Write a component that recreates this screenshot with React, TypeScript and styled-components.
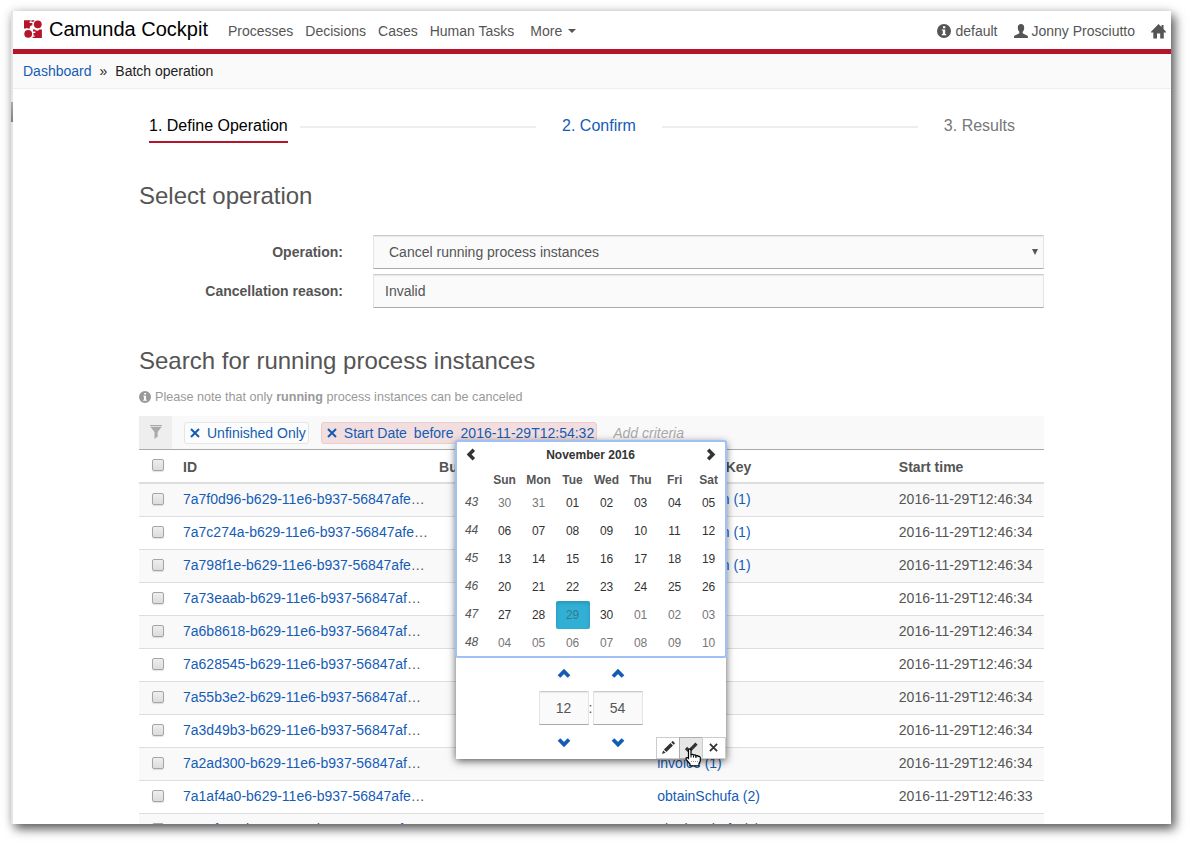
import React from "react";
import styled, { createGlobalStyle, css } from "styled-components";

const GlobalStyle = createGlobalStyle`
  *, *::before, *::after { box-sizing: border-box; }
  body {
    margin: 0;
    background: #fff;
    color: #555;
    font: 14px/20px "Liberation Sans", Arial, sans-serif;
  }
  button, input, select { font: inherit; color: inherit; margin: 0; }
  button { cursor: pointer; }
  a { text-decoration: none; }
  h1, h2, p, ul, ol { margin: 0; padding: 0; font-weight: normal; }
  ul, ol { list-style: none; }
`;

const colors = {
  link: "#155cb5",
  brand: "#b5152b",
  text: "#555",
  dark: "#333",
  soft: "#fafafa",
};

/* ---------- icons ---------- */

const Svg = styled.svg<{ $size?: number }>`
  display: block;
  flex: none;
  width: ${(p) => p.$size ?? 14}px;
  height: ${(p) => p.$size ?? 14}px;
  fill: currentColor;
`;

const Logo = () => (
  <Svg $size={18} viewBox="0 0 18 18" aria-hidden="true">
    <path d="M0 0.3H6.6V1.6H5.6V3H8.3V5.4H7.2A2 2 0 0 0 5.8 7.4V8.6H3.8A1.3 1.3 0 0 0 1.6 8.6H0Z" />
    <path d="M7.4 0.3H10.6L9.6 1.8H7.4Z" />
    <circle cx="13.8" cy="4.3" r="3.9" />
    <circle cx="4.2" cy="13.8" r="3.9" />
    <path d="M9 9.6H11A2.4 2.4 0 0 0 15.2 9.6H17.9V17.9H8.6V16.8H10.6V15.6H9.2A3 3 0 0 0 9.4 13H11.3V11.6H9Z" />
  </Svg>
);

const InfoIcon = ({ size = 14 }: { size?: number }) => (
  <Svg $size={size} viewBox="0 0 14 14" aria-hidden="true">
    <path
      fillRule="evenodd"
      d="M7 0a7 7 0 1 1 0 14A7 7 0 0 1 7 0ZM6 2.200v2h2.300v-2ZM4.800 5.400v1h1v3.700h-1v1.200h4.400v-1.200h-1V5.400Z"
    />
  </Svg>
);

const UserIcon = () => (
  <Svg viewBox="0 0 14 14" aria-hidden="true">
    <path d="M7 0C9 0 10.200 1.300 10.200 3.500c0 1.900-.5 3.300-1.500 4.300v1.300c.2.600 1 .9 2.200 1.300 1.700.6 3 1.200 3 2.200V14H0v-1.400c0-1 1.300-1.600 3-2.200 1.200-.4 2.100-.7 2.300-1.300V7.800C4.300 6.800 3.800 5.400 3.800 3.500 3.800 1.300 5 0 7 0Z" />
  </Svg>
);

const HomeIcon = () => (
  <Svg $size={15} viewBox="0 0 15 15" aria-hidden="true">
    <path d="M7.500 0 10.500 3V1h2v4L15 7.800v.7h-2.200V14.500H9.200V9.500H6v5H2.300V8.500H0v-.7Z" />
  </Svg>
);

const FilterIcon = () => (
  <Svg viewBox="0 0 14 14" aria-hidden="true">
    <path d="M1 0h12v1.300H1ZM1.500 2h11L8.700 7V11.500L5.500 14V7Z" />
  </Svg>
);

const RemoveIcon = ({ size = 10 }: { size?: number }) => (
  <Svg $size={size} viewBox="0 0 10 10" aria-hidden="true">
    <path d="M1 1 9 9M9 1 1 9" stroke="currentColor" strokeWidth="2" fill="none" />
  </Svg>
);

const chevrons = {
  left: "M9.500 2 4.500 7l5 5",
  right: "M4.500 2l5 5-5 5",
  up: "M2 9.500l5-5 5 5",
  down: "M2 4.500l5 5 5-5",
};
const Chevron = ({ to, size = 14 }: { to: keyof typeof chevrons; size?: number }) => (
  <Svg $size={size} viewBox="0 0 14 14" aria-hidden="true">
    <path d={chevrons[to]} stroke="currentColor" strokeWidth="3.8" fill="none" />
  </Svg>
);

const PencilIcon = () => (
  <Svg viewBox="0 0 14 14" aria-hidden="true">
    <path d="M1 13l1.200-3.600 2.400 2.400ZM2.900 8.600 9.500 2l2.500 2.500-6.600 6.600ZM10.200 1.300l.9-.9c.4-.4.8-.4 1.200 0l1.300 1.300c.4.400.4.800 0 1.200l-.9.9Z" />
  </Svg>
);

const CheckIcon = () => (
  <Svg viewBox="0 0 14 14" aria-hidden="true">
    <path d="M2 7 5.200 10 12.500 2.600" stroke="currentColor" strokeWidth="3.200" fill="none" />
  </Svg>
);

/* ---------- frame ---------- */

const Page = styled.div`
  height: 100vh;
  padding: 11px 19px 19px 11px;
`;

const Frame = styled.div`
  display: flex;
  height: 100%;
  overflow: hidden;
  background: #fff;
`;

const Shadow = styled.div`
  height: 100%;
  box-shadow: 4px 5px 10px rgba(0, 0, 0, 0.62), 0 0 10px rgba(0, 0, 0, 0.12);
`;

const Gutter = styled.div`
  flex: none;
  width: 2px;
  padding-top: 91px;
  background: #e5e5e5;
`;

const GutterHandle = styled.div`
  height: 20px;
  background: linear-gradient(#aaa, #808080);
`;

const Main = styled.div`
  flex: 1;
  min-width: 0;
`;

/* ---------- header ---------- */

const Header = styled.header`
  display: flex;
  align-items: flex-start;
  height: 43px;
  padding: 0 5px 0 11px;
  border-bottom: 5px solid ${colors.brand};
`;

const Brand = styled.a`
  display: flex;
  align-items: center;
  gap: 7px;
  margin-right: 20px;
  color: ${colors.brand};
  font-size: 20px;
  line-height: 36px;
`;

const BrandName = styled.span`
  color: #000;
`;

const NavList = styled.ul`
  display: flex;
  gap: 12px;
  padding-top: 10px;
`;

const AccountList = styled(NavList)`
  gap: 16px;
  margin-left: auto;
`;

const NavLink = styled.a`
  display: flex;
  align-items: center;
  gap: 4px;
  height: 20px;
  color: ${colors.text};
`;

const MenuButton = styled.button`
  display: flex;
  align-items: center;
  gap: 6px;
  padding: 0 0 0 4px;
  border: 0;
  background: none;
`;

const Caret = styled.span`
  border: 4px solid transparent;
  border-top-color: currentColor;
  border-bottom: 0;
`;

const Breadcrumbs = styled.nav`
  display: flex;
  gap: 8px;
  height: 35px;
  padding: 7px 10px;
  background: ${colors.soft};
  border-bottom: 1px solid #eee;
  color: #222;
`;

const Link = styled.a`
  color: ${colors.link};
`;

/* ---------- content ---------- */

const Content = styled.main`
  padding: 26px 127px 0 126px;
`;

const Steps = styled.ol`
  display: flex;
  align-items: flex-start;
  padding: 0 29px 0 10px;
  font-size: 16px;
  line-height: 22px;
`;

const Step = styled.li<{ $state: "active" | "next" | "idle" }>`
  padding-bottom: 4px;
  border-bottom: 2px solid transparent;
  color: #777;
  ${(p) => p.$state === "active" && css`color: #000; border-color: ${colors.brand};`}
  ${(p) => p.$state === "next" && css`color: ${colors.link};`}
`;

const StepLine = styled.li<{ $grow: number; $start: number }>`
  flex: ${(p) => p.$grow};
  height: 2px;
  margin: 11px 26px 0 ${(p) => p.$start}px;
  background: #eee;
`;

const Heading = styled.h2`
  padding-top: 39px;
  color: ${colors.text};
  font-size: 24px;
  line-height: 28px;
`;

const Form = styled.form`
  display: grid;
  grid-template-columns: 204px 1fr;
  gap: 5px 30px;
  align-items: center;
  padding-top: 25px;
`;

const Label = styled.label`
  font-weight: bold;
  text-align: right;
`;

const field = css`
  width: 100%;
  height: 34px;
  border: 1px solid #e5e5e5;
  border-top-color: #ccc;
  border-bottom-color: #aaa;
  border-radius: 0;
  background: ${colors.soft};
  box-shadow: inset 0 1px 1px rgba(0, 0, 0, 0.075);
  outline: 0;
`;

const SelectWrap = styled.div`
  display: grid;
  align-items: center;

  &::after {
    content: "";
    grid-area: 1 / 1;
    justify-self: end;
    margin-right: 6px;
    border: 3px solid transparent;
    border-top: 6px solid ${colors.text};
    border-bottom: 0;
    pointer-events: none;
  }
`;

const Select = styled.select`
  ${field}
  grid-area: 1 / 1;
  padding: 0 15px;
  appearance: none;
`;

const TextInput = styled.input`
  ${field}
  padding: 0 11px;
`;

const Note = styled.p`
  display: flex;
  align-items: center;
  gap: 4px;
  padding: 13px 0 10px;
  color: #999;
  font-size: 0.9em;
  line-height: 18px;
`;

/* ---------- search bar ---------- */

const SearchBar = styled.div`
  display: flex;
  align-items: center;
  height: 34px;
  background: #f9f9f9;
  border-bottom: 1px solid #aaa;
`;

const FilterBox = styled.button`
  display: grid;
  place-items: center;
  width: 33px;
  height: 33px;
  padding: 0 0 2px;
  border: 0;
  background: #eee;
  color: #aaa;
`;

const Pill = styled.div<{ $invalid?: boolean }>`
  display: flex;
  align-items: center;
  gap: 7px;
  height: 22px;
  margin-left: 12px;
  padding: 0 2px 0 5px;
  border: 1px solid ${(p) => (p.$invalid ? "#ebccd1" : "#e5e5e5")};
  border-radius: 3px;
  background: ${(p) => (p.$invalid ? "#f2dede" : "#fcfcfc")};
  color: ${colors.link};
`;

const IconButton = styled.button`
  display: grid;
  place-items: center;
  padding: 0;
  border: 0;
  background: none;
`;

const Value = styled.div`
  position: relative;
`;

const Criteria = styled.input`
  flex: 1;
  min-width: 0;
  margin-left: 16px;
  padding: 0;
  border: 0;
  background: none;
  outline: 0;
  font-style: italic;
  &::placeholder { color: #aaa; }
`;

/* ---------- date picker ---------- */

const Popup = styled.div`
  position: absolute;
  z-index: 2;
  top: 18px;
  left: -5px;
  width: 270px;
  background: #fff;
  box-shadow: 0 2px 8px rgba(0, 0, 0, 0.65);
`;

const Calendar = styled.div`
  outline: 2px solid #a0c0f8;
  outline-offset: -1px;
  border-radius: 2px;
  color: ${colors.dark};
  font-size: 12px;
  line-height: 16px;
`;

const MonthBar = styled.div`
  display: flex;
  align-items: center;
  justify-content: space-between;
  height: 28px;
  padding: 0 9px;
`;

const Days = styled.table`
  width: 100%;
  table-layout: fixed;
  border-collapse: collapse;
  text-align: center;
`;

const DayName = styled.th`
  height: 20px;
  padding: 2px 0 0;
  color: ${colors.text};

  &:first-child { width: 32px; }
`;

const WeekCell = styled.th`
  height: 28px;
  padding: 0 0 2px;
  color: ${colors.text};
  font-weight: normal;
  font-style: italic;
`;

const DayCell = styled.td`
  height: 28px;
  padding: 0;
`;

const Day = styled.button<{ $muted?: boolean; $selected?: boolean }>`
  display: block;
  width: 100%;
  height: 28px;
  padding: 0;
  border: 0;
  border-radius: 2px;
  background: ${(p) => (p.$selected ? "#31b0d5" : "none")};
  box-shadow: ${(p) => (p.$selected ? "inset 0 2px 4px rgba(0, 0, 0, 0.15)" : "none")};
  color: ${(p) => (p.$selected ? "#377a90" : p.$muted ? "#777" : colors.dark)};
`;

const TimePicker = styled.div`
  display: grid;
  grid-template-columns: 50px 4px 50px;
  grid-template-rows: 34px 34px 34px;
  justify-content: center;
  place-items: center;
  color: ${colors.link};
`;

const TimeInput = styled.input`
  ${field}
  padding: 0;
  color: ${colors.text};
  text-align: center;
`;

const Colon = styled.span`
  color: ${colors.text};
`;

const Actions = styled.div`
  position: absolute;
  right: 0;
  bottom: 0;
  display: flex;
`;

const Action = styled.button<{ $hover?: boolean }>`
  display: grid;
  place-items: center;
  width: 24px;
  height: 22px;
  margin-left: -1px;
  padding: 0;
  border: 1px solid ${(p) => (p.$hover ? "#adadad" : "#ccc")};
  background: ${(p) => (p.$hover ? "#e6e6e6" : "#fff")};
  color: ${colors.dark};
`;

const Pointer = styled.svg`
  position: absolute;
  right: 24px;
  bottom: -8px;
  width: 17px;
  height: 19px;
`;

/* ---------- table ---------- */

const Table = styled.table`
  width: 100%;
  table-layout: fixed;
  border-collapse: separate;
  border-spacing: 0;
`;

const Col = styled.col<{ $w?: string }>`
  width: ${(p) => p.$w ?? "auto"};
`;

const Checkbox = styled.input`
  display: block;
  appearance: none;
  width: 12px;
  height: 12px;
  margin: 0 0 0 8px;
  border: 1px solid #a5a5a5;
  border-radius: 2px;
  background: linear-gradient(#eee, #dcdcdc);
  box-shadow: 0 1px 1px rgba(0, 0, 0, 0.12);
`;

const Th = styled.th`
  height: 34px;
  padding: 2px 5px 0;
  border-bottom: 2px solid #ddd;
  text-align: left;
  white-space: nowrap;

  ${Checkbox} { margin-bottom: 4px; }
`;

const Row = styled.tr`
  &:nth-child(odd) { background: #f9f9f9; }
`;

const Td = styled.td`
  height: 33px;
  padding: 0 5px 2px;
  border-bottom: 1px solid #ddd;
  white-space: nowrap;
`;

/* ---------- data ---------- */

const weeks: [number, string[]][] = [
  [43, ["30", "31", "01", "02", "03", "04", "05"]],
  [44, ["06", "07", "08", "09", "10", "11", "12"]],
  [45, ["13", "14", "15", "16", "17", "18", "19"]],
  [46, ["20", "21", "22", "23", "24", "25", "26"]],
  [47, ["27", "28", "29", "30", "01", "02", "03"]],
  [48, ["04", "05", "06", "07", "08", "09", "10"]],
];

const instances = [
  ["7a7f0d96-b629-11e6-b937-56847afe", "Submission (1)", "34"],
  ["7a7c274a-b629-11e6-b937-56847afe", "Submission (1)", "34"],
  ["7a798f1e-b629-11e6-b937-56847afe", "Submission (1)", "34"],
  ["7a73eaab-b629-11e6-b937-56847af", "invoice (1)", "34"],
  ["7a6b8618-b629-11e6-b937-56847af", "invoice (1)", "34"],
  ["7a628545-b629-11e6-b937-56847af", "invoice (1)", "34"],
  ["7a55b3e2-b629-11e6-b937-56847af", "invoice (1)", "34"],
  ["7a3d49b3-b629-11e6-b937-56847af", "invoice (1)", "34"],
  ["7a2ad300-b629-11e6-b937-56847af", "invoice (1)", "34"],
  ["7a1af4a0-b629-11e6-b937-56847afe", "obtainSchufa (2)", "33"],
  ["7a02f190-b629-11e6-b937-56847afe", "obtainSchufa (2)", "33"],
];

const DatePicker = () => (
  <Popup>
    <Calendar>
      <MonthBar>
        <IconButton aria-label="Previous month"><Chevron to="left" size={13} /></IconButton>
        <strong>November 2016</strong>
        <IconButton aria-label="Next month"><Chevron to="right" size={13} /></IconButton>
      </MonthBar>
      <Days>
        <thead>
          <tr>
            <DayName aria-label="Week" />
            {["Sun", "Mon", "Tue", "Wed", "Thu", "Fri", "Sat"].map((d) => (
              <DayName key={d} scope="col">{d}</DayName>
            ))}
          </tr>
        </thead>
        <tbody>
          {weeks.map(([week, days], w) => (
            <tr key={week}>
              <WeekCell scope="row">{week}</WeekCell>
              {days.map((d, i) => {
                const muted = (w === 0 && i < 2) || (w === 4 && i > 3) || w === 5;
                return (
                  <DayCell key={d}>
                    <Day $muted={muted} $selected={w === 4 && i === 2}>{d}</Day>
                  </DayCell>
                );
              })}
            </tr>
          ))}
        </tbody>
      </Days>
    </Calendar>
    <TimePicker>
      <IconButton aria-label="Hour up"><Chevron to="up" /></IconButton>
      <span />
      <IconButton aria-label="Minute up"><Chevron to="up" /></IconButton>
      <TimeInput aria-label="Hours" defaultValue="12" />
      <Colon>:</Colon>
      <TimeInput aria-label="Minutes" defaultValue="54" />
      <IconButton aria-label="Hour down"><Chevron to="down" /></IconButton>
      <span />
      <IconButton aria-label="Minute down"><Chevron to="down" /></IconButton>
    </TimePicker>
    <Actions>
      <Action aria-label="Edit as text"><PencilIcon /></Action>
      <Action aria-label="Apply" $hover><CheckIcon /></Action>
      <Action aria-label="Cancel"><RemoveIcon size={9} /></Action>
    </Actions>
    <Pointer viewBox="0 0 17 19" aria-hidden="true">
      <path
        d="M3.500 2.500c0-2 2.500-2 2.500 0V7c.5-1 2.500-.8 2.500.5.500-1 2.500-.8 2.500.5.500-.8 2.300-.5 2.300.5 1-.5 2 .2 2 1.200V13l-1.300 2.500v2.300H5V16L1.500 12c-1.500-2 .5-3.200 2-1.700Z"
        fill="#fff"
        stroke="#000"
        strokeWidth="1.200"
      />
      <path d="M6 7v2.500M8.500 7.500v2M11 8v2" stroke="#000" strokeWidth="1" />
      <path d="M6 13.500h7" stroke="#999" strokeWidth="1" strokeDasharray="1 1" />
    </Pointer>
  </Popup>
);

export default function App() {
  return (
    <Page>
      <GlobalStyle />
      <Shadow>
        <Frame>
          <Gutter><GutterHandle /></Gutter>
          <Main>
            <Header>
              <Brand href="#"><Logo /><BrandName>Camunda Cockpit</BrandName></Brand>
              <NavList>
                {["Processes", "Decisions", "Cases", "Human Tasks"].map((t) => (
                  <li key={t}><NavLink href="#">{t}</NavLink></li>
                ))}
                <li><MenuButton>More <Caret /></MenuButton></li>
              </NavList>
              <AccountList>
                <li><NavLink href="#"><InfoIcon />default</NavLink></li>
                <li><NavLink href="#"><UserIcon />Jonny Prosciutto</NavLink></li>
                <li><NavLink href="#" aria-label="Home"><HomeIcon /></NavLink></li>
              </AccountList>
            </Header>
            <Breadcrumbs>
              <Link href="#">Dashboard</Link>
              <span>»</span>
              <span>Batch operation</span>
            </Breadcrumbs>
            <Content>
              <Steps>
                <Step $state="active">1. Define Operation</Step>
                <StepLine $grow={12} $start={12} aria-hidden="true" />
                <Step $state="next">2. Confirm</Step>
                <StepLine $grow={13} $start={26} aria-hidden="true" />
                <Step $state="idle">3. Results</Step>
              </Steps>

              <Heading>Select operation</Heading>
              <Form>
                <Label htmlFor="operation">Operation:</Label>
                <SelectWrap>
                  <Select id="operation">
                    <option>Cancel running process instances</option>
                  </Select>
                </SelectWrap>
                <Label htmlFor="reason">Cancellation reason:</Label>
                <TextInput id="reason" defaultValue="Invalid" />
              </Form>

              <Heading>Search for running process instances</Heading>
              <Note>
                <InfoIcon size={12} />
                <span>Please note that only <strong>running</strong> process instances can be canceled</span>
              </Note>

              <SearchBar>
                <FilterBox aria-label="Filter"><FilterIcon /></FilterBox>
                <Pill>
                  <IconButton aria-label="Remove"><RemoveIcon /></IconButton>
                  <span>Unfinished Only</span>
                </Pill>
                <Pill $invalid>
                  <IconButton aria-label="Remove"><RemoveIcon /></IconButton>
                  <span>Start Date</span>
                  <span>before</span>
                  <Value>
                    2016-11-29T12:54:32
                    <DatePicker />
                  </Value>
                </Pill>
                <Criteria placeholder="Add criteria" aria-label="Add criteria" />
              </SearchBar>

              <Table>
                <colgroup>
                  <Col $w="39px" />
                  <Col $w="28.3%" />
                  <Col $w="24.1%" />
                  <Col $w="26.7%" />
                  <Col />
                </colgroup>
                <thead>
                  <tr>
                    <Th><Checkbox type="checkbox" aria-label="Select all" /></Th>
                    <Th>ID</Th>
                    <Th>Business Key</Th>
                    <Th>Definition Key</Th>
                    <Th>Start time</Th>
                  </tr>
                </thead>
                <tbody>
                  {instances.map(([id, key, sec]) => (
                    <Row key={id}>
                      <Td><Checkbox type="checkbox" aria-label={id} /></Td>
                      <Td><Link href="#">{id}</Link>…</Td>
                      <Td />
                      <Td><Link href="#">{key}</Link></Td>
                      <Td>2016-11-29T12:46:{sec}</Td>
                    </Row>
                  ))}
                </tbody>
              </Table>
            </Content>
          </Main>
        </Frame>
      </Shadow>
    </Page>
  );
}
